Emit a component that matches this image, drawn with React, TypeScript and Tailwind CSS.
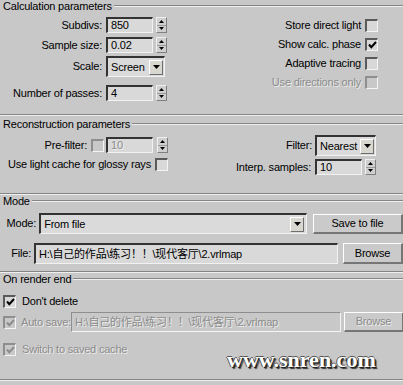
import clsx from "clsx";

const FONT = "font-['Liberation_Sans','Noto_Sans_CJK_SC',Arial,sans-serif]";
const DIS = "text-[#8c8c8c] [text-shadow:1px_1px_0_#ececec]";

function Etch({ className = "" }: { className?: string }) {
  return <div className={clsx("border-t border-t-[#858585] border-b border-b-[#efefef]", className)} />;
}

function Title({ text }: { text: string }) {
  return (
    <div className="flex items-center h-[12px] pl-[3px]">
      <span className="pr-[2px] whitespace-nowrap">{text}</span>
      <Etch className="flex-1" />
    </div>
  );
}

function Spinner() {
  return (
    <div className="w-[11px] h-[16px] flex flex-col border border-t-[#f0f0f0] border-l-[#f0f0f0] border-b-[#808080] border-r-[#808080] bg-[#cfcfcf]">
      <div className="flex-1 flex items-center justify-center border-b border-b-[#9a9a9a]">
        <svg width="5" height="3" viewBox="0 0 5 3">
          <path d="M2.5 0L5 3H0z" fill="#000" />
        </svg>
      </div>
      <div className="flex-1 flex items-center justify-center">
        <svg width="5" height="3" viewBox="0 0 5 3">
          <path d="M0 0h5L2.5 3z" fill="#000" />
        </svg>
      </div>
    </div>
  );
}

function Check({ checked = false, disabled = false }: { checked?: boolean; disabled?: boolean }) {
  return (
    <div
      className={clsx(
        "w-[13px] h-[13px] shrink-0 flex items-center justify-center border-t-2 border-l-2 border-b border-r border-b-[#f4f4f4] border-r-[#f4f4f4]",
        disabled ? "border-t-[#8e8e8e] border-l-[#8e8e8e] bg-[#c8c8c8]" : "border-t-[#5a5a5a] border-l-[#5a5a5a] bg-[#d8d8d8]"
      )}
    >
      {checked && (
        <svg width="9" height="8" viewBox="0 0 9 8">
          <path d="M1 3.5l2.3 2.7L8 1" stroke={disabled ? "#8c8c8c" : "#000"} strokeWidth="2" fill="none" />
        </svg>
      )}
    </div>
  );
}

function Field({ text, w, h = 16, disabled = false, dim = false }: { text: string; w: string; h?: number; disabled?: boolean; dim?: boolean }) {
  return (
    <div
      style={{ height: h }}
      className={clsx(
        w,
        "shrink-0 flex items-center pl-[3px] whitespace-nowrap overflow-hidden",
        disabled
          ? "border-t border-l border-t-[#8e8e8e] border-l-[#8e8e8e] border-b border-r border-b-[#f4f4f4] border-r-[#f4f4f4] bg-[#c8c8c8]"
          : "border-t-2 border-l-2 border-t-[#333] border-l-[#333] border-b border-r border-b-[#f2f2f2] border-r-[#f2f2f2] bg-[#d9d9d9]",
        (disabled || dim) && DIS
      )}
    >
      {text}
    </div>
  );
}

function Arrow() {
  return (
    <div className="w-[14px] h-[15px] shrink-0 flex items-center justify-center border-t border-l border-t-white border-l-white border-b border-r border-b-[#6e6e6e] border-r-[#6e6e6e] bg-[#d8d8d0]">
      <svg width="7" height="4" viewBox="0 0 7 4">
        <path d="M0 0h7L3.5 4z" fill="#000" />
      </svg>
    </div>
  );
}

function Drop({ text, w }: { text: string; w: string }) {
  return (
    <div className={clsx(w, "h-[21px] flex items-center justify-between pl-[3px] pr-[1px] border-t-2 border-l-2 border-t-[#333] border-l-[#333] border-b border-r border-b-[#f2f2f2] border-r-[#f2f2f2] bg-[#dadada]")}>
      <span className="whitespace-nowrap">{text}</span>
      <Arrow />
    </div>
  );
}

function Btn({ label, w, h, disabled = false }: { label: string; w: string; h: string; disabled?: boolean }) {
  return (
    <div
      className={clsx(
        w,
        h,
        "shrink-0 flex items-center justify-center border-t border-l border-t-white border-l-white border-b-2 border-r-2 border-b-[#767676] border-r-[#767676] bg-[#cacaca]",
        disabled && DIS
      )}
    >
      {label}
    </div>
  );
}

function CheckRow({ label, checked, disabled }: { label: string; checked?: boolean; disabled?: boolean }) {
  return (
    <div className="flex items-center justify-end gap-[4px] h-[14px]">
      <span className={clsx("whitespace-nowrap", disabled && DIS)}>{label}</span>
      <Check checked={checked} disabled={disabled} />
    </div>
  );
}

function SpinRow({ label, value, mt }: { label: string; value: string; mt: string }) {
  return (
    <div className={clsx("flex items-center h-[16px]", mt)}>
      <span className="w-[102px] text-right whitespace-nowrap">{label}</span>
      <Field text={value} w="w-[47px] ml-[4px]" />
      <div className="ml-[3px]">
        <Spinner />
      </div>
    </div>
  );
}

export default function App() {
  return (
    <div className={clsx(FONT, "relative w-[403px] h-[385px] overflow-hidden bg-[#c8c8c8] text-[11px] leading-[13px] tracking-[-0.2px] text-black")}>
      {/* Calculation parameters */}
      <Title text="Calculation parameters" />
      <div className="h-[102px] flex justify-between">
        <div>
          <SpinRow label="Subdivs:" value="850" mt="mt-[5px]" />
          <SpinRow label="Sample size:" value="0.02" mt="mt-[4px]" />
          <div className="flex items-center mt-[3px] h-[21px]">
            <span className="w-[102px] text-right">Scale:</span>
            <div className="ml-[4px]">
              <Drop text="Screen" w="w-[59px]" />
            </div>
          </div>
          <SpinRow label="Number of passes:" value="4" mt="mt-[8px]" />
        </div>
        <div className="pr-[25px] pt-[6px] flex flex-col gap-[5px]">
          <CheckRow label="Store direct light" />
          <CheckRow label="Show calc. phase" checked />
          <CheckRow label="Adaptive tracing" />
          <CheckRow label="Use directions only" disabled />
        </div>
      </div>
      <Etch />

      {/* Reconstruction parameters */}
      <div className="mt-[2px]">
        <Title text="Reconstruction parameters" />
      </div>
      <div className="h-[63px] flex justify-between">
        <div className="pt-[7px]">
          <div className="flex items-center h-[16px]">
            <span className="w-[87px] text-right">Pre-filter:</span>
            <div className="ml-[4px]">
              <Check disabled />
            </div>
            <Field text="10" w="w-[47px] ml-[2px]" dim />
            <div className="ml-[4px]">
              <Spinner />
            </div>
          </div>
          <div className="flex items-center h-[14px] mt-[4px] pl-[8px] gap-[4px]">
            <span className="whitespace-nowrap">Use light cache for glossy rays</span>
            <Check />
          </div>
        </div>
        <div className="pr-[27px] pt-[5px]">
          <div className="flex items-center justify-end h-[21px]">
            <span>Filter:</span>
            <div className="ml-[3px]">
              <Drop text="Nearest" w="w-[61px]" />
            </div>
          </div>
          <div className="flex items-center justify-end h-[16px] mt-[3px]">
            <span>Interp. samples:</span>
            <Field text="10" w="w-[47px] ml-[4px]" />
            <div className="ml-[3px]">
              <Spinner />
            </div>
          </div>
        </div>
      </div>
      <Etch />

      {/* Mode */}
      <Title text="Mode" />
      <div className="h-[64px] pt-[6px]">
        <div className="flex items-center h-[21px]">
          <span className="w-[37px] text-right">Mode:</span>
          <div className="w-[274px] ml-[3px] h-[21px] flex items-center justify-between pl-[3px] pr-[2px] border-t-2 border-l-2 border-t-[#333] border-l-[#333] border-b border-r border-b-[#f2f2f2] border-r-[#f2f2f2] bg-[#dadada]">
            <span>From file</span>
            <Arrow />
          </div>
          <Btn label="Save to file" w="w-[90px] ml-[6px]" h="h-[20px]" />
        </div>
        <div className="flex items-center h-[21px] mt-[9px]">
          <span className="w-[37px] text-right">File:</span>
          <Field text="H:\自己的作品\练习！！\现代客厅\2.vrlmap" w="w-[304px] ml-[3px]" h={21} />
          <Btn label="Browse" w="w-[60px] ml-[5px]" h="h-[21px]" />
        </div>
      </div>
      <Etch />

      {/* On render end */}
      <Title text="On render end" />
      <div className="h-[84px]">
        <div className="flex items-center h-[13px] mt-[10px] pl-[3px] gap-[6px]">
          <Check checked />
          <span>Don't delete</span>
        </div>
        <div className="flex items-center h-[20px] mt-[4px] pl-[3px]">
          <Check checked disabled />
          <span className={clsx("ml-[5px] w-[54px] whitespace-nowrap", DIS)}>Auto save:</span>
          <Field text="H:\自己的作品\练习！！\现代客厅\2.vrlmap" w="w-[270px]" h={20} disabled />
          <Btn label="Browse" w="w-[60px] ml-[3px]" h="h-[20px]" disabled />
        </div>
        <div className="flex items-center h-[13px] mt-[11px] pl-[3px] gap-[6px]">
          <Check checked disabled />
          <span className={DIS}>Switch to saved cache</span>
        </div>
      </div>
      <Etch />

      {/* next rollout */}
      <div className="mt-[9px] border-t border-t-[#f0f0f0]">
        <div className="border-t border-t-black text-center pt-[1px]">V-Ray:: Caustics</div>
      </div>

      {/* watermark */}
      <div className="absolute left-[227px] top-[349px] font-['Liberation_Serif',serif] font-bold text-[22px] leading-[22px] tracking-normal text-white [text-shadow:1px_1px_0_#222,-1px_0_0_#555,0_-1px_0_#555,2px_2px_1px_#333]">
        www.snren.com
      </div>
    </div>
  );
}
